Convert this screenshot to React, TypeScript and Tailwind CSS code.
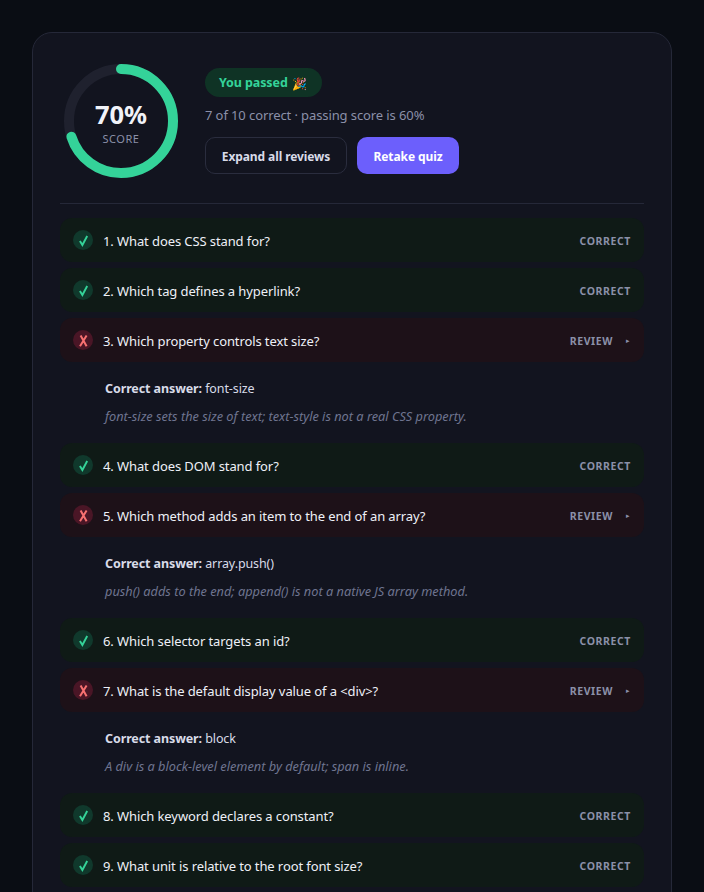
import React from "react";

interface Question {
  text: string;
  correct: boolean;
  answer?: string;
  note?: string;
}

const questions: Question[] = [
  { text: "1. What does CSS stand for?", correct: true },
  { text: "2. Which tag defines a hyperlink?", correct: true },
  {
    text: "3. Which property controls text size?",
    correct: false,
    answer: "font-size",
    note: "font-size sets the size of text; text-style is not a real CSS property.",
  },
  { text: "4. What does DOM stand for?", correct: true },
  {
    text: "5. Which method adds an item to the end of an array?",
    correct: false,
    answer: "array.push()",
    note: "push() adds to the end; append() is not a native JS array method.",
  },
  { text: "6. Which selector targets an id?", correct: true },
  {
    text: "7. What is the default display value of a <div>?",
    correct: false,
    answer: "block",
    note: "A div is a block-level element by default; span is inline.",
  },
  { text: "8. Which keyword declares a constant?", correct: true },
  { text: "9. What unit is relative to the root font size?", correct: true },
];

const ScoreRing: React.FC = () => {
  const r = 52;
  const circumference = 2 * Math.PI * r;
  return (
    <div className="relative ml-[3px] h-[116px] w-[116px] shrink-0">
      <svg width="116" height="116" viewBox="0 0 116 116" className="-rotate-90">
        <circle cx="58" cy="58" r={r} fill="none" stroke="#1f212e" strokeWidth="10" />
        <circle
          cx="58"
          cy="58"
          r={r}
          fill="none"
          stroke="#34d399"
          strokeWidth="10"
          strokeLinecap="round"
          strokeDasharray={`${circumference * 0.7} ${circumference}`}
        />
      </svg>
      <div className="absolute inset-0 flex flex-col items-center justify-center pt-[2px]">
        <span className="text-[25.5px] leading-[30px] font-bold text-[#f1f3f9]">70%</span>
        <span className="mt-[3px] text-[11px] leading-[14px] tracking-[0.5px] text-[#8b90a8]">SCORE</span>
      </div>
    </div>
  );
};

const StatusIcon: React.FC<{ correct: boolean }> = ({ correct }) => (
  <span
    className={`h-[20px] w-[20px] shrink-0 rounded-full ${correct ? "bg-[#10392c]" : "bg-[#4a1626]"}`}
  >
    <svg width="20" height="20" viewBox="0 0 20 20" fill="none">
      {correct ? (
        <path d="M6.9 10.9 9.4 15 14.2 6" stroke="#34d399" strokeWidth="1.9" />
      ) : (
        <path d="M7.6 5.5 13.6 16.3M13.6 5.5 7 16.3" stroke="#f87171" strokeWidth="2" />
      )}
    </svg>
  </span>
);

const Row: React.FC<{ q: Question }> = ({ q }) => (
  <div>
    <div
      className={`flex h-[44px] items-center gap-[10px] rounded-[12px] px-[13px] ${
        q.correct ? "bg-[#0f1a16]" : "bg-[#1d1118]"
      }`}
    >
      <StatusIcon correct={q.correct} />
      <span className="mt-[4px] flex-1 text-[13px] tracking-[-0.1px] text-[#eef0f7]">{q.text}</span>
      {q.correct ? (
        <span className="mt-[4px] text-[10.5px] font-bold tracking-[0.6px] text-[#8b90a8]">CORRECT</span>
      ) : (
        <>
          <span className="mt-[4px] text-[10.5px] font-bold tracking-[0.6px] text-[#8b90a8]">REVIEW</span>
          <span className="mt-[2px] ml-[3px] mr-[1px] text-[7px] text-[#8b90a8]">▸</span>
        </>
      )}
    </div>
    {q.answer && (
      <div className="px-[45px] pt-[17px] pb-[11px]">
        <p className="text-[12.5px] leading-[20px] tracking-[-0.1px] text-[#d8dbe8]">
          <strong className="font-bold">Correct answer:</strong> {q.answer}
        </p>
        <p className="mt-[7px] text-[12.75px] leading-[20px] text-[#6f7490] italic">{q.note}</p>
      </div>
    )}
  </div>
);

export default function App() {
  return (
    <div className="h-[892px] overflow-hidden bg-[#0a0d14] p-[32px] font-['Noto_Sans',sans-serif]">
      <div className="rounded-[20px] border border-[#252838] bg-[#12141f] px-[27px] pt-[30px] pb-[24px]">
        <div className="flex items-center gap-[26px] border-b border-[#252838] pb-[24px]">
          <ScoreRing />
          <div>
            <span className="inline-flex h-[29px] w-[117px] items-center gap-[4px] rounded-full bg-[#0f3325] pt-[2px] pl-[14px] text-[12.5px] font-bold tracking-[-0.1px] text-[#34d399]">
              You passed <span className="text-[12px]">🎉</span>
            </span>
            <p className="mt-[8px] text-[13px] leading-[20px] tracking-[-0.1px] text-[#8b90a8]">7 of 10 correct · passing score is 60%</p>
            <div className="mt-[12px] flex gap-[10px]">
              <button className="h-[37px] w-[142px] rounded-[10px] border border-[#2a2d3e] pt-[2px] text-[12px] font-bold tracking-[-0.1px] text-[#d8dbe8]">
                Expand all reviews
              </button>
              <button className="h-[37px] w-[102px] rounded-[10px] bg-[#6c5ffc] pt-[2px] text-[12px] font-bold tracking-[-0.1px] text-white">
                Retake quiz
              </button>
            </div>
          </div>
        </div>
        <div className="mt-[14px] flex flex-col gap-[6px]">
          {questions.map((q) => (
            <Row key={q.text} q={q} />
          ))}
        </div>
      </div>
    </div>
  );
}
